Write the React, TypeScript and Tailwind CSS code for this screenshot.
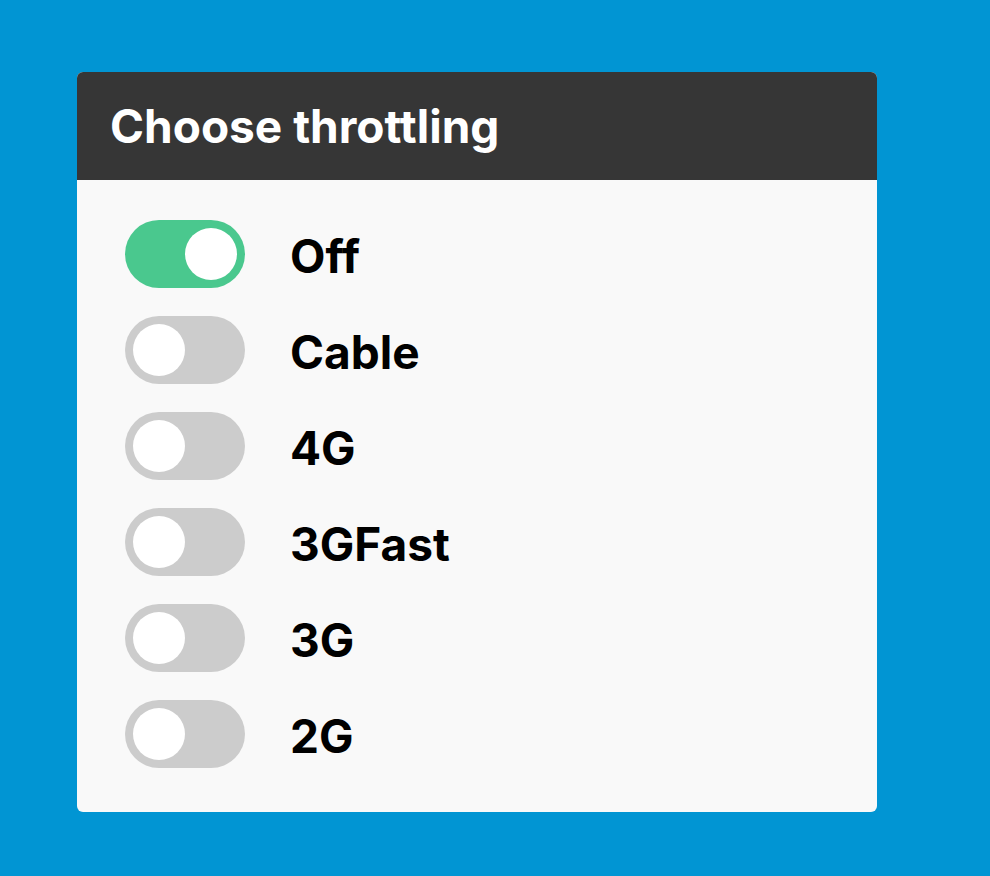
import React from "react";

const items = ["Off", "Cable", "4G", "3GFast", "3G", "2G"];

function Toggle({ on }: { on: boolean }) {
  return (
    <div
      className={
        "flex h-[68px] w-[120px] shrink-0 items-center rounded-full px-[8px] " +
        (on ? "justify-end bg-[#4ac88e]" : "justify-start bg-[#cccccc]")
      }
    >
      <div className="h-[52px] w-[52px] rounded-full bg-white" />
    </div>
  );
}

export default function App() {
  return (
    <div
      className="min-h-[876px] w-full bg-[#0195d3] pl-[77px] pt-[72px]"
      style={{ fontFamily: "Inter, 'Noto Sans', sans-serif" }}
    >
      <div className="w-[800px] overflow-hidden rounded-[6px] bg-[#f9f9f9]">
        <div className="flex h-[108px] items-center bg-[#363636] pl-[33px]">
          <h1 className="text-[46px] font-bold leading-none text-white">
            Choose throttling
          </h1>
        </div>
        <div className="flex flex-col gap-[28px] pb-[44px] pl-[48px] pt-[40px]">
          {items.map((label, i) => (
            <div key={label} className="flex items-center gap-[45px]">
              <Toggle on={i === 0} />
              <span className="pt-[4px] text-[46px] font-bold leading-none text-black">
                {label}
              </span>
            </div>
          ))}
        </div>
      </div>
    </div>
  );
}
